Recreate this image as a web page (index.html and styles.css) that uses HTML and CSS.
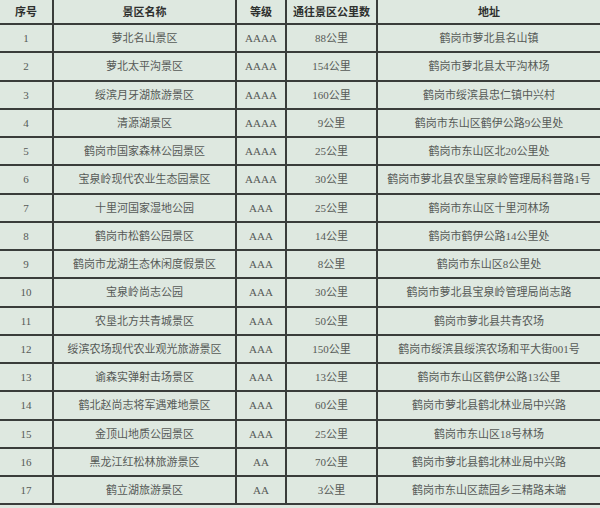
FILE: index.html
```html
<!DOCTYPE html>
<html lang="zh">
<head>
<meta charset="utf-8">
<link rel="stylesheet" href="styles.css">
</head>
<body>
<table class="sites">
  <colgroup>
    <col class="c-no"><col class="c-name"><col class="c-level"><col class="c-dist"><col class="c-addr">
  </colgroup>
  <thead>
    <tr><th>序号</th><th>景区名称</th><th>等级</th><th>通往景区公里数</th><th>地址</th></tr>
  </thead>
  <tbody>
    <tr><td>1</td><td>萝北名山景区</td><td>AAAA</td><td>88公里</td><td>鹤岗市萝北县名山镇</td></tr>
    <tr><td>2</td><td>萝北太平沟景区</td><td>AAAA</td><td>154公里</td><td>鹤岗市萝北县太平沟林场</td></tr>
    <tr><td>3</td><td>绥滨月牙湖旅游景区</td><td>AAAA</td><td>160公里</td><td>鹤岗市绥滨县忠仁镇中兴村</td></tr>
    <tr><td>4</td><td>清源湖景区</td><td>AAAA</td><td>9公里</td><td>鹤岗市东山区鹤伊公路9公里处</td></tr>
    <tr><td>5</td><td>鹤岗市国家森林公园景区</td><td>AAAA</td><td>25公里</td><td>鹤岗市东山区北20公里处</td></tr>
    <tr><td>6</td><td>宝泉岭现代农业生态园景区</td><td>AAAA</td><td>30公里</td><td>鹤岗市萝北县农垦宝泉岭管理局科普路1号</td></tr>
    <tr><td>7</td><td>十里河国家湿地公园</td><td>AAA</td><td>25公里</td><td>鹤岗市东山区十里河林场</td></tr>
    <tr><td>8</td><td>鹤岗市松鹤公园景区</td><td>AAA</td><td>14公里</td><td>鹤岗市鹤伊公路14公里处</td></tr>
    <tr><td>9</td><td>鹤岗市龙湖生态休闲度假景区</td><td>AAA</td><td>8公里</td><td>鹤岗市东山区8公里处</td></tr>
    <tr><td>10</td><td>宝泉岭尚志公园</td><td>AAA</td><td>30公里</td><td>鹤岗市萝北县宝泉岭管理局尚志路</td></tr>
    <tr><td>11</td><td>农垦北方共青城景区</td><td>AAA</td><td>50公里</td><td>鹤岗市萝北县共青农场</td></tr>
    <tr><td>12</td><td>绥滨农场现代农业观光旅游景区</td><td>AAA</td><td>150公里</td><td>鹤岗市绥滨县绥滨农场和平大街001号</td></tr>
    <tr><td>13</td><td>谕森实弹射击场景区</td><td>AAA</td><td>13公里</td><td>鹤岗市东山区鹤伊公路13公里</td></tr>
    <tr><td>14</td><td>鹤北赵尚志将军遇难地景区</td><td>AAA</td><td>60公里</td><td>鹤岗市萝北县鹤北林业局中兴路</td></tr>
    <tr><td>15</td><td>金顶山地质公园景区</td><td>AAA</td><td>25公里</td><td>鹤岗市东山区18号林场</td></tr>
    <tr><td>16</td><td>黑龙江红松林旅游景区</td><td>AA</td><td>70公里</td><td>鹤岗市萝北县鹤北林业局中兴路</td></tr>
    <tr><td>17</td><td>鹤立湖旅游景区</td><td>AA</td><td>3公里</td><td>鹤岗市东山区蔬园乡三精路末端</td></tr>
  </tbody>
</table>
</body>
</html>
```
FILE: styles.css
```css
html, body {
  margin: 0;
  padding: 0;
  background: #dee8e0;
}
.sites {
  width: 600px;
  table-layout: fixed;
  border-collapse: collapse;
  font-family: "Liberation Serif", "Noto Sans CJK SC", serif;
  font-size: 11px;
  color: #565a57;
}
.c-no { width: 53px; }
.c-name { width: 183px; }
.c-level { width: 50px; }
.c-dist { width: 91px; }
.c-addr { width: 223px; }
.sites th, .sites td {
  border: 2px solid #3a3d3b;
  text-align: center;
  padding: 0;
  line-height: 14px;
  white-space: nowrap;
}
.sites th {
  height: 23px;
  border-top: none;
  font-weight: bold;
  color: #2e302e;
}
.sites td {
  height: 26.25px;
}
.sites th:first-child, .sites td:first-child { border-left: none; }
.sites th:last-child, .sites td:last-child { border-right: none; }
```
